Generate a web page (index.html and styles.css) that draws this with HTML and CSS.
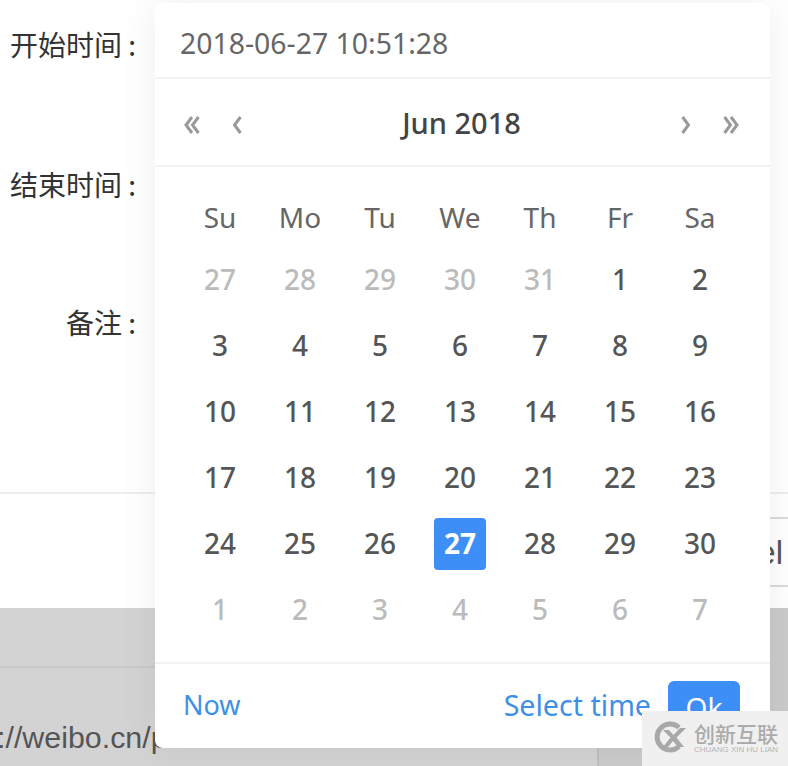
FILE: index.html
```html
<!DOCTYPE html>
<html lang="zh">
<head>
<meta charset="utf-8">
<title>Date picker</title>
<link rel="stylesheet" href="styles.css">
</head>
<body>
<div class="page">
  <section class="modal">
    <form class="form">
      <div class="form-row row-start"><label>开始时间 :</label></div>
      <div class="form-row row-end"><label>结束时间 :</label></div>
      <div class="form-row row-note"><label>备注 :</label></div>
    </form>
    <div class="modal-footer"><span class="cancel">Cancel</span></div>
  </section>
  <section class="table">
    <div class="table-row first">
      <div class="cell main"><span class="clip-text">/o&nbsp;&nbsp;&nbsp;ooo&nbsp;oo</span></div>
      <div class="cell side"></div>
    </div>
    <div class="table-row second">
      <div class="cell main"><span class="url">://weibo.cn/p/1/ o o o</span></div>
      <div class="cell side"></div>
    </div>
  </section>

  <div class="picker">
    <div class="picker-input">2018-06-27 10:51:28</div>
    <div class="picker-header">
      <div class="nav-group">
        <svg class="nav nav-double" viewBox="0 0 16 18"><path d="M8 1 2 9l6 8M14.500 1l-6 8 6 8"/></svg>
        <svg class="nav nav-single" viewBox="0 0 9 18"><path d="M7.500 1 1.500 9l6 8"/></svg>
      </div>
      <div class="month">Jun 2018</div>
      <div class="nav-group">
        <svg class="nav nav-single" viewBox="0 0 9 18"><path d="M1.500 1l6 8-6 8"/></svg>
        <svg class="nav nav-double" viewBox="0 0 16 18"><path d="M1.500 1l6 8-6 8M8 1l6 8-6 8"/></svg>
      </div>
    </div>
    <div class="picker-body">
      <div class="weekdays">
        <span>Su</span><span>Mo</span><span>Tu</span><span>We</span><span>Th</span><span>Fr</span><span>Sa</span>
      </div>
      <div class="days">
        <span class="muted">27</span><span class="muted">28</span><span class="muted">29</span><span class="muted">30</span><span class="muted">31</span><span>1</span><span>2</span>
        <span>3</span><span>4</span><span>5</span><span>6</span><span>7</span><span>8</span><span>9</span>
        <span>10</span><span>11</span><span>12</span><span>13</span><span>14</span><span>15</span><span>16</span>
        <span>17</span><span>18</span><span>19</span><span>20</span><span>21</span><span>22</span><span>23</span>
        <span>24</span><span>25</span><span>26</span><span><b class="selected">27</b></span><span>28</span><span>29</span><span>30</span>
        <span class="muted">1</span><span class="muted">2</span><span class="muted">3</span><span class="muted">4</span><span class="muted">5</span><span class="muted">6</span><span class="muted">7</span>
      </div>
    </div>
    <div class="picker-footer">
      <a class="link now">Now</a>
      <div class="footer-actions">
        <a class="link select">Select time</a>
        <button class="ok" type="button">Ok</button>
      </div>
    </div>
  </div>

  <div class="watermark">
    <svg class="wm-logo" viewBox="0 0 34 32">
      <path class="wm-ring" d="M26 6.500A13 13 0 1 0 26 25.500"/>
      <path class="wm-x" d="M10 9h6l4.500 5L27 7h6l-9.500 9.500L31 26h-6l-5-6-5 6h-5l7.500-9.500z"/>
    </svg>
    <div class="wm-text">
      <div class="wm-cn">创新互联</div>
      <div class="wm-en">CHUANG XIN HU LIAN</div>
    </div>
  </div>
</div>
</body>
</html>
```
FILE: styles.css
```css
* { box-sizing: border-box; }
html, body { margin: 0; padding: 0; }
body { background: #fff; font-family: "Noto Sans", "Noto Sans CJK SC", sans-serif; }

.page { position: relative; width: 788px; height: 766px; overflow: hidden; }

/* Modal behind the picker */
.modal { height: 608px; background: #fff; overflow: hidden; }
.form { height: 492px; padding-top: 24px; display: flex; flex-direction: column; }
.form-row { width: 136px; display: flex; justify-content: flex-end; height: 40px; flex: none; }
.row-end { margin-top: 100px; }
.row-note { margin-top: 98px; }
.form-row label { font: 28px/40px "Noto Sans CJK SC", sans-serif; color: #333; white-space: nowrap; }
.modal-footer { height: 116px; border-top: 2px solid #eee; padding: 23px 0 0; display: flex; justify-content: flex-end; align-items: flex-start; }
.cancel { height: 70px; margin-right: -30px; padding: 0 33px 0 30px; border: 2px solid #dcdcdc; font: 33px/68px "Liberation Sans", sans-serif; color: #555; }

/* Table behind the modal */
.table { height: 158px; background: #d3d3d3; }
.table-row { display: flex; overflow: hidden; }
.first { height: 60px; border-bottom: 2px solid #c9c9c9; }
.second { height: 98px; }
.cell.main { flex: 1; min-width: 0; white-space: nowrap; overflow: hidden; }
.cell.side { width: 191px; flex: none; background: #cbcbcb; border-left: 2px solid #bfbfbf; }
.clip-text { display: block; font: 30px/40px "Liberation Sans", sans-serif; color: #666; margin-top: -31px; margin-left: 4px; }
.url { display: block; font: 30.400px/40px "Liberation Sans", sans-serif; color: #555; margin-top: 49px; margin-left: -3px; }

/* Date picker overlay */
.picker { position: absolute; left: 155px; top: 3px; width: 615px; height: 745px; background: #fff; border-radius: 8px; box-shadow: 0 0 40px rgba(0, 0, 0, .07); display: flex; flex-direction: column; }
.picker-input { height: 76px; padding: 0 25px; border-bottom: 2px solid #f2f2f2; font-size: 28.400px; line-height: 80px; color: #666; }
.picker-header { height: 88px; flex: none; padding: 2px 31px 0 29px; border-bottom: 2px solid #f2f2f2; display: flex; align-items: center; justify-content: space-between; }
.nav-group { display: flex; align-items: center; gap: 33px; margin-top: 4px; }
.nav { display: block; height: 18px; fill: none; stroke: #999; stroke-width: 3; }
.nav-double { width: 16px; }
.nav-single { width: 9px; }
.month { font-size: 29px; font-weight: 500; line-height: 40px; color: #444; }

.picker-body { flex: 1; padding: 21px 25px 0; }
.weekdays, .days { display: grid; grid-template-columns: repeat(7, 80px); text-align: center; }
.weekdays { height: 58px; font-size: 28px; line-height: 58px; color: #666; }
.days { grid-auto-rows: 66px; font-size: 28px; font-weight: 500; color: #555; }
.days span { display: flex; align-items: center; justify-content: center; }
.days .muted { color: #bbb; }
.selected { width: 52px; height: 52px; margin-top: 2px; padding-bottom: 2px; border-radius: 4px; background: #3e8ef7; color: #fff; font-weight: 700; display: flex; align-items: center; justify-content: center; }

.picker-footer { height: 86px; flex: none; border-top: 2px solid #f2f2f2; padding: 17px 30px 0 28px; display: flex; justify-content: space-between; align-items: flex-start; }
.link { font-size: 28px; line-height: 48px; color: #3f8fe6; }
.now { font-size: 27px; }
.select { font-size: 28.600px; }
.footer-actions { display: flex; gap: 17px; }
.ok { width: 72px; height: 52px; border: 0; border-radius: 6px; background: #3e8ef7; color: #fff; font: 28px/52px "Noto Sans", sans-serif; padding: 0; }

/* Watermark */
.watermark { position: absolute; left: 642px; top: 711px; width: 146px; height: 55px; background: #f0f0f0; display: flex; align-items: flex-start; padding: 10px 10px 0 11px; gap: 7px; }
.wm-logo { width: 34px; height: 32px; flex: none; }
.wm-ring { fill: none; stroke: #a8a8a8; stroke-width: 5; }
.wm-x { fill: #a8a8a8; }
.wm-cn { font: 500 21px/24px "Noto Sans CJK SC", sans-serif; color: #ababab; white-space: nowrap; }
.wm-en { font: 8px/10px "Liberation Sans", sans-serif; color: #b5b5b5; white-space: nowrap; }
```
